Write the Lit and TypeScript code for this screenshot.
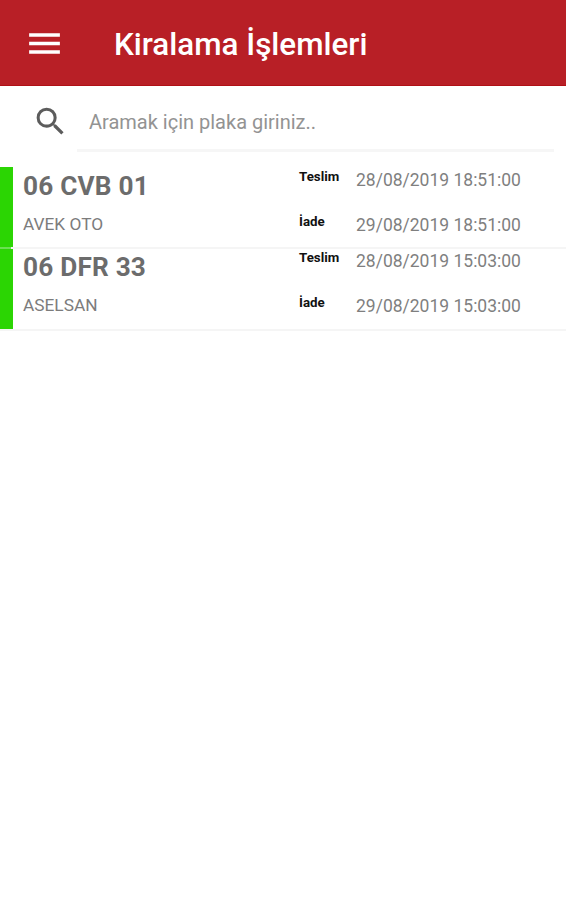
import { LitElement, html, css } from "lit";
import { customElement } from "lit/decorators.js";

interface Rental {
  plate: string;
  company: string;
  delivery: string;
  back: string;
}

const rentals: Rental[] = [
  { plate: "06 CVB 01", company: "AVEK OTO", delivery: "28/08/2019 18:51:00", back: "29/08/2019 18:51:00" },
  { plate: "06 DFR 33", company: "ASELSAN", delivery: "28/08/2019 15:03:00", back: "29/08/2019 15:03:00" },
];

@customElement("app-root")
export class AppRoot extends LitElement {
  static styles = css`
    :host { display: block; height: 900px; background: #fff; font-family: Roboto, sans-serif; overflow: hidden; }
    * { box-sizing: border-box; }
    header { display: flex; align-items: center; height: 86px; padding: 1px 0 0 24px; background: #b81f26; border-bottom: 1px solid #b01016; color: #fff; }
    .menu { width: 41px; height: 41px; fill: #fff; }
    h1 { margin: 3px 0 0 49px; font-size: 31.4px; line-height: 40px; font-weight: 500; white-space: nowrap; }
    .search { display: flex; height: 81px; padding: 0 12px 0 32px; }
    .glass { width: 37px; height: 37px; margin-top: 17px; fill: #5c5c5c; }
    .field { flex: 1; height: 66px; margin-left: 8px; padding: 23px 0 0 12px; border-bottom: 3px solid #f6f6f6; font-size: 20px; line-height: 26px; color: #939393; white-space: nowrap; }
    .row { display: grid; grid-template-columns: 13px 286px 57px 1fr; grid-template-rows: 37px 1fr; height: 82px; border-bottom: 2px solid #f5f5f5; white-space: nowrap; }
    .row + .row { height: 82px; }
    .row:first-child { border-image: linear-gradient(to right, #6be052 13px, #f5f5f5 13px) 2; border-width: 0 0 2px; border-style: solid; }
    .status { grid-row: 1 / 3; background: #2bd503; }
    .plate { padding: 3px 0 0 10px; font-size: 26.2px; line-height: 32px; font-weight: 700; letter-spacing: 0.2px; color: #6c6c6c; }
    .company { padding: 8px 0 0 10px; font-size: 17.3px; line-height: 24px; color: #7c7c7c; }
    .label { padding-top: 1px; font-size: 13.3px; line-height: 18px; font-weight: 700; color: #111; }
    .label.back { padding-top: 9px; }
    .date { padding-top: 1px; font-size: 17.5px; line-height: 24px; color: #7f7f7f; }
    .date.back { padding-top: 9px; }
    .row + .row > :not(.status) { margin-top: -1px; }
  `;

  render() {
    return html`
      <header>
        <svg class="menu" viewBox="0 0 24 24"><path d="M3 18h18v-2H3v2zm0-5h18v-2H3v2zm0-7v2h18V6H3z" /></svg>
        <h1>Kiralama İşlemleri</h1>
      </header>
      <div class="search">
        <svg class="glass" viewBox="0 0 24 24"><path d="M15.5 14h-.79l-.28-.27A6.471 6.471 0 0 0 16 9.5 6.5 6.5 0 1 0 9.5 16c1.61 0 3.09-.59 4.23-1.57l.27.28v.79l5 4.99L20.49 19l-4.99-5zm-6 0C7.01 14 5 11.99 5 9.5S7.01 5 9.5 5 14 7.01 14 9.5 11.99 14 9.5 14z" /></svg>
        <div class="field">Aramak için plaka giriniz..</div>
      </div>
      <main>
        ${rentals.map((r) => html`
          <div class="row">
            <div class="status"></div>
            <div class="plate">${r.plate}</div>
            <div class="label">Teslim</div>
            <div class="date">${r.delivery}</div>
            <div class="company">${r.company}</div>
            <div class="label back">İade</div>
            <div class="date back">${r.back}</div>
          </div>
        `)}
      </main>
    `;
  }
}
